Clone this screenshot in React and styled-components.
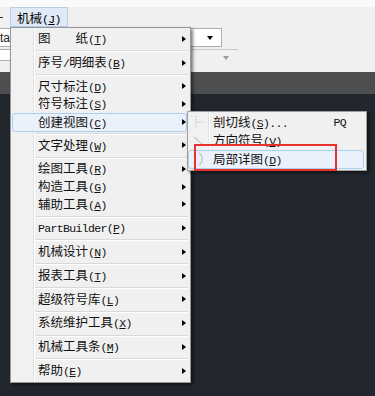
import React from 'react';
import styled, { createGlobalStyle, css } from 'styled-components';

const GlobalStyle = createGlobalStyle`
  html, body {
    margin: 0;
    padding: 0;
  }
  body {
    background: #22272e;
    font-family: "Noto Sans CJK SC", "Liberation Sans", sans-serif;
  }
`;

const menuItems = [
    { label: '图\u3000\u3000纸', hotkey: 'T' },
    'sep',
    { label: '序号/明细表', hotkey: 'B' },
    'sep',
    { label: '尺寸标注', hotkey: 'D' },
    { label: '符号标注', hotkey: 'S' },
    { label: '创建视图', hotkey: 'C', active: true },
    'sep',
    { label: '文字处理', hotkey: 'W' },
    'sep',
    { label: '绘图工具', hotkey: 'R' },
    { label: '构造工具', hotkey: 'G' },
    { label: '辅助工具', hotkey: 'A' },
    'sep',
    { label: 'PartBuilder', hotkey: 'P' },
    'sep',
    { label: '机械设计', hotkey: 'N' },
    'sep',
    { label: '报表工具', hotkey: 'T' },
    'sep',
    { label: '超级符号库', hotkey: 'L' },
    'sep',
    { label: '系统维护工具', hotkey: 'X' },
    'sep',
    { label: '机械工具条', hotkey: 'M' },
    'sep',
    { label: '帮助', hotkey: 'E' },
];

const subItems = [
    { icon: 'section', label: '剖切线', hotkey: 'S', suffix: '...', shortcut: 'PQ' },
    { icon: 'direction', label: '方向符号', hotkey: 'V' },
    { icon: 'detail', label: '局部详图', hotkey: 'D', active: true },
];

const Screen = styled.div`
    position: relative;
    width: 375px;
    height: 396px;
    overflow: hidden;
    display: flex;
    flex-direction: column;
    background: #22272e;
`;

const TopStrip = styled.div`
    height: 7px;
    background: #fafafa;
`;

const MenuBar = styled.div`
    height: 20px;
    display: flex;
    align-items: stretch;
    background: #f0f0f0;
`;

const BarStub = styled.span`
    width: 10px;
    display: flex;
    align-items: center;
    &::before {
        content: '';
        width: 3px;
        height: 1px;
        background: #333;
    }
`;

const BarItem = styled.div`
    display: flex;
    align-items: center;
    padding: 0 6px;
    border: 1px solid transparent;
    font-size: 12.5px;
    color: #000;
    ${(p) =>
        p.$active &&
        css`
            background: #e0eaf6;
            border-color: #b6cfe9;
        `}
`;

const Toolbar = styled.div`
    height: 45px;
    box-sizing: border-box;
    padding-top: 1px;
    display: flex;
    flex-direction: column;
    gap: 2px;
    background: #f0f0f0;
`;

const Combo = styled.div`
    height: 19px;
    width: 232px;
    margin-left: -10px;
    box-sizing: border-box;
    border: 1px solid #abadb3;
    background: #fff;
    display: flex;
    align-items: center;
    justify-content: space-between;
    padding: 0 8px 0 1px;
    font: 12px "Liberation Sans", sans-serif;
    color: #222;
`;

const Caret = styled.span`
    width: 0;
    height: 0;
    border-top: 4px solid ${(p) => p.$color};
    border-left: 3.5px solid transparent;
    border-right: 3.5px solid transparent;
`;

const StyleRow = styled.div`
    height: 12px;
    display: flex;
`;

const WhiteInput = styled.div`
    width: 190px;
    box-sizing: border-box;
    background: #fff;
    border-top: 1px solid #abadb3;
    border-bottom: 1px solid #abadb3;
`;

const DropSeg = styled.div`
    width: 48px;
    box-sizing: border-box;
    border-top: 1px solid #c9c9c9;
    display: flex;
    align-items: flex-end;
    justify-content: flex-end;
    padding: 0 9px 1px 0;
`;

const Band = styled.div`
    height: 22px;
    background: #4c4e50;
`;

const Canvas = styled.div`
    flex: 1;
    background: #22272e;
`;

const Menu = styled.div`
    position: absolute;
    left: 10px;
    top: 27px;
    width: 181px;
    box-sizing: border-box;
    border: 1px solid #979797;
    padding: 2px 0;
    background: linear-gradient(
        to right,
        #f1f1f1 0 22px,
        #e2e3e3 22px 23px,
        #ffffff 23px 24px,
        #f0f0f0 24px
    );
    box-shadow: 2px 2px 3px rgba(0, 0, 0, 0.5);
`;

const Row = styled.div`
    height: 17.6px;
    box-sizing: border-box;
    margin: 0 3px 0 1px;
    padding-left: 25px;
    display: flex;
    align-items: center;
    border: 1px solid transparent;
    border-radius: 3px;
    font-size: 12.5px;
    line-height: 1;
    color: #111;
    white-space: nowrap;
    ${(p) =>
        p.$active &&
        css`
            height: 19px;
            margin-bottom: -1.4px;
            background: #eaf1fa;
            border-color: #aad0f0;
        `}
`;

const Arrow = styled.span`
    margin-left: auto;
    width: 0;
    height: 0;
    border-left: 4px solid #000;
    border-top: 3.5px solid transparent;
    border-bottom: 3.5px solid transparent;
`;

const Separator = styled.div`
    height: 6.2px;
    margin: 0 2px 0 24px;
    display: flex;
    align-items: center;
    &::before {
        content: '';
        flex: 1;
        height: 1px;
        background: #d9d9d9;
        box-shadow: 0 1px 0 #fff;
    }
`;

const Latin = styled.span`
    font-family: "Liberation Mono", monospace;
    font-size: 11.5px;
    letter-spacing: -0.65px;
    & u {
        text-underline-offset: 1px;
    }
`;

const SubMenu = styled.div`
    position: absolute;
    left: 187px;
    top: 111px;
    width: 180px;
    box-sizing: border-box;
    border: 1px solid #a0a0a0;
    padding: 1px 0;
    background: linear-gradient(
        to right,
        #f1f1f1 0 20px,
        #e2e3e3 20px 21px,
        #ffffff 21px 22px,
        #f0f0f0 22px
    );
    box-shadow: 2px 2px 3px rgba(0, 0, 0, 0.5);
`;

const SubRow = styled.div`
    height: 18.5px;
    box-sizing: border-box;
    margin: 0 2px 0 0;
    display: flex;
    align-items: center;
    border: 1px solid transparent;
    border-radius: 3px;
    font-size: 12.5px;
    line-height: 1;
    color: #111;
    white-space: nowrap;
    ${(p) =>
        p.$active &&
        css`
            background: #eaf1fa;
            border-color: #aad0f0;
        `}
`;

const IconSlot = styled.span`
    width: 20px;
    height: 16px;
    display: flex;
    align-items: center;
    justify-content: center;
`;

const SubText = styled.span`
    margin-left: 4px;
`;

const Shortcut = styled(Latin)`
    margin-left: auto;
    margin-right: 17px;
`;

const Callout = styled.div`
    position: absolute;
    left: 194px;
    top: 144px;
    width: 143px;
    height: 27px;
    box-sizing: border-box;
    border: 2px solid #e8322e;
`;

function Label({ text, hotkey, suffix }) {
    const runs = text.match(/[\x00-\x7f]+|[^\x00-\x7f]+/g);
    return (
        <span>
            {runs.map((r, i) =>
                /^[\x00-\x7f]+$/.test(r) ? <Latin key={i}>{r}</Latin> : <span key={i}>{r}</span>
            )}
            <Latin>
                (<u>{hotkey}</u>){suffix}
            </Latin>
        </span>
    );
}

function SubIcon({ type }) {
    if (type === 'section') {
        return (
            <svg width="14" height="14" viewBox="0 0 14 14">
                <path d="M4 1v12M4 7h9" stroke="#c4c4c4" strokeWidth="1.2" strokeDasharray="1.5 1.5" fill="none" />
            </svg>
        );
    }
    if (type === 'direction') {
        return (
            <svg width="14" height="14" viewBox="0 0 14 14">
                <path d="M2 3l10 9" stroke="#c8c8c8" strokeWidth="1.2" fill="none" />
            </svg>
        );
    }
    return (
        <svg width="14" height="16" viewBox="0 0 14 16">
            <path d="M7 2c4 2 4 10 0 12" stroke="#c0c0c0" strokeWidth="1.2" fill="none" />
        </svg>
    );
}

export default function App() {
    return (
        <Screen>
            <GlobalStyle />
            <TopStrip />
            <MenuBar>
                <BarStub />
                <BarItem $active>
                    <Label text="机械" hotkey="J" />
                </BarItem>
            </MenuBar>
            <Toolbar>
                <Combo>
                    <span>Standard</span>
                    <Caret $color="#000" />
                </Combo>
                <StyleRow>
                    <WhiteInput />
                    <DropSeg>
                        <Caret $color="#9a9a9a" />
                    </DropSeg>
                </StyleRow>
            </Toolbar>
            <Band />
            <Canvas />

            <Menu>
                {menuItems.map((item, i) =>
                    item === 'sep' ? (
                        <Separator key={i} />
                    ) : (
                        <Row key={i} $active={item.active}>
                            <Label text={item.label} hotkey={item.hotkey} />
                            <Arrow />
                        </Row>
                    )
                )}
            </Menu>

            <SubMenu>
                {subItems.map((item) => (
                    <SubRow key={item.label} $active={item.active}>
                        <IconSlot>
                            <SubIcon type={item.icon} />
                        </IconSlot>
                        <SubText>
                            <Label text={item.label} hotkey={item.hotkey} suffix={item.suffix} />
                        </SubText>
                        {item.shortcut && <Shortcut>{item.shortcut}</Shortcut>}
                    </SubRow>
                ))}
            </SubMenu>

            <Callout />
        </Screen>
    );
}
